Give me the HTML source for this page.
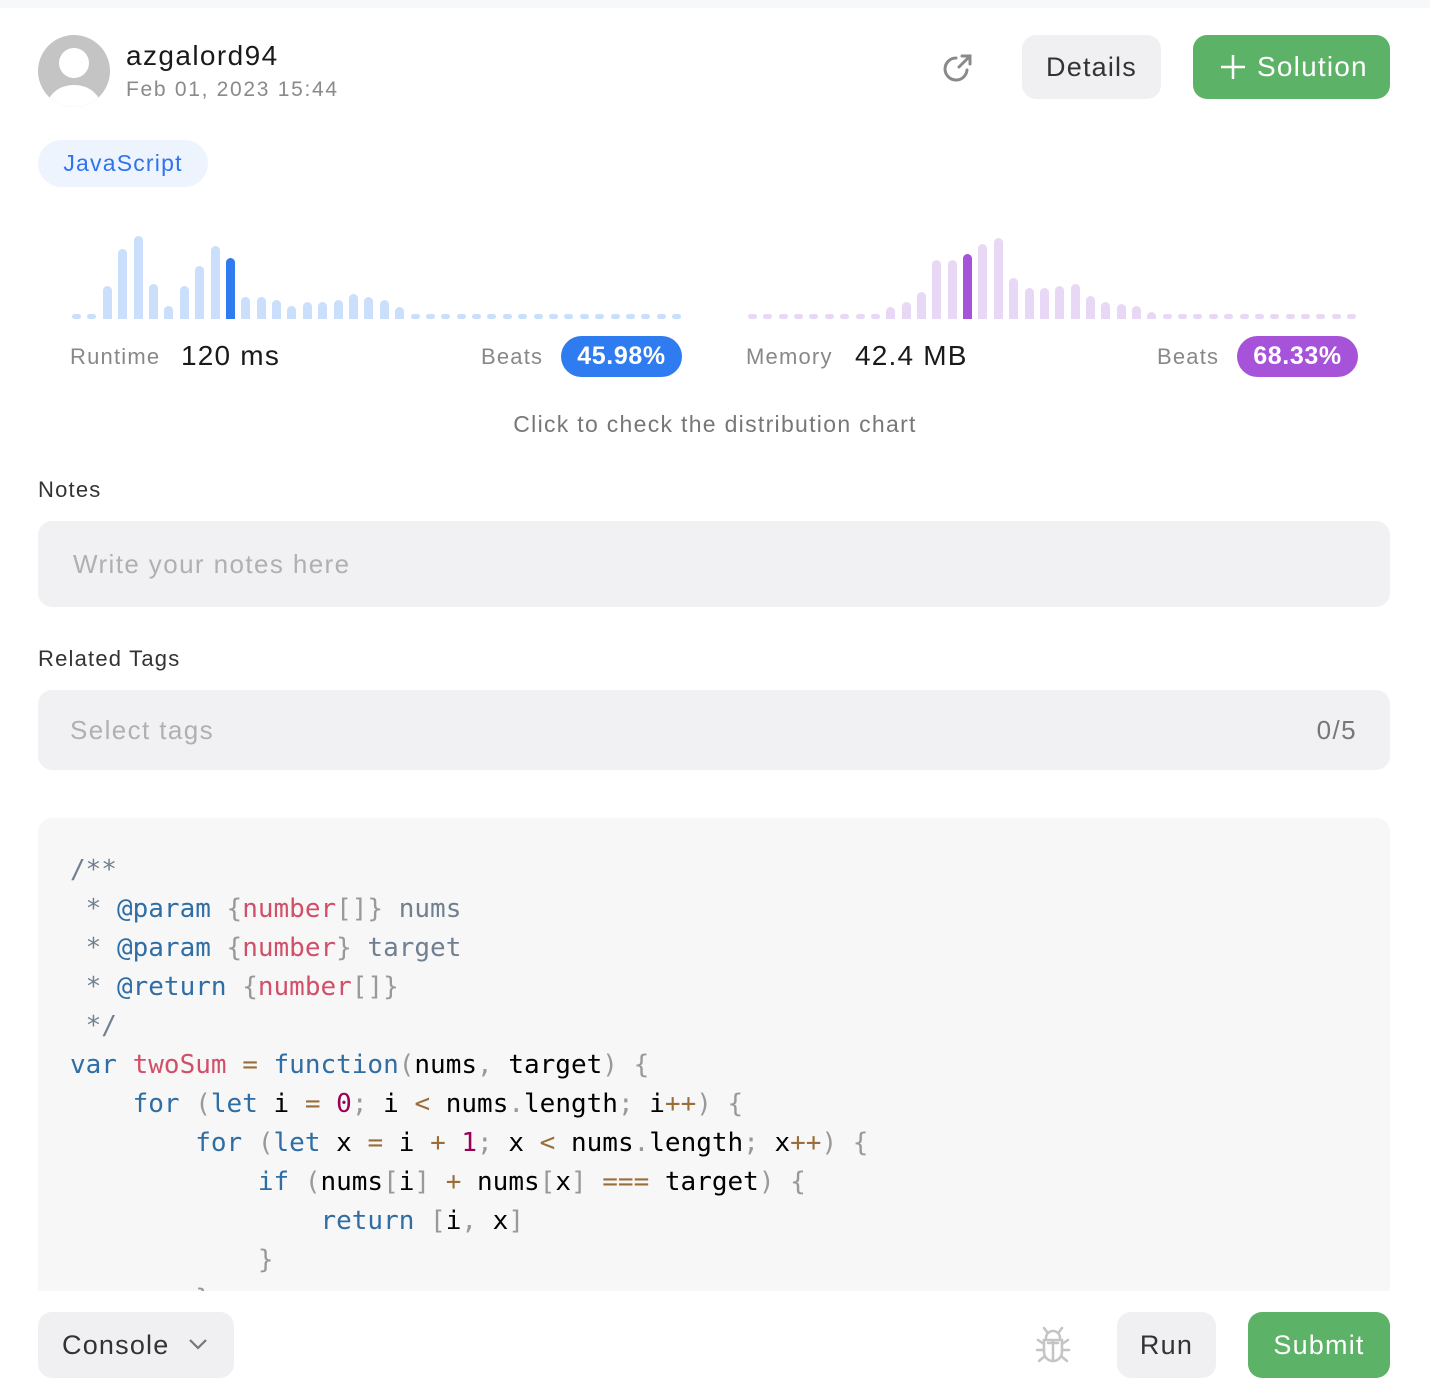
<!DOCTYPE html>
<html><head><meta charset="utf-8">
<style>
*{margin:0;padding:0;box-sizing:border-box}
body{width:1430px;height:1398px;background:#fff;font-family:"Liberation Sans",sans-serif;position:relative;overflow:hidden;letter-spacing:1.2px}
.a{position:absolute;white-space:nowrap}
.bar{position:absolute;width:9px;border-radius:5px 5px 0 0}
.code{position:absolute;left:38px;top:818px;width:1352px;height:473px;background:#f7f7f7;border-radius:14px 14px 0 0;overflow:hidden;letter-spacing:0}
.code pre{position:absolute;left:32px;top:33px;font-family:"DejaVu Sans Mono","Liberation Mono",monospace;font-size:26px;line-height:39px;color:#000}
.cm{color:#708090}.kw{color:#2f6ea5}.fn{color:#d0506a}.ty{color:#d0506a}.p{color:#999}.op{color:#9a6e3a}.nm{color:#905}
</style></head><body>
<div class="a" style="left:0;top:0;width:1430px;height:8px;background:#f7f8fa"></div>
<svg class="a" style="left:38px;top:35px" width="72" height="72" viewBox="0 0 72 72"><defs><clipPath id="c"><circle cx="36" cy="36" r="36"/></clipPath></defs><circle cx="36" cy="36" r="36" fill="#c4c4c4"/><g clip-path="url(#c)" fill="#fff"><circle cx="36" cy="28" r="15"/><ellipse cx="36" cy="72" rx="27" ry="22"/></g></svg>
<div class="a" style="left:126px;top:40px;font-size:28px;color:#1a1a1a;letter-spacing:1.4px">azgalord94</div>
<div class="a" style="left:126px;top:78px;font-size:21px;color:#8a8a8a;letter-spacing:1.7px">Feb 01, 2023 15:44</div>
<svg class="a" style="left:940px;top:50px" width="36" height="36" viewBox="0 0 36 36" fill="none" stroke="#8a8a8a" stroke-width="3" stroke-linecap="round"><path d="M27 20 A11 11 0 1 1 16 8"/><path d="M19 17 L30 6"/><path d="M22 6 H30 V14"/></svg>
<div class="a" style="left:1022px;top:35px;width:139px;height:64px;background:#f0f0f2;border-radius:14px;font-size:27px;color:#333;text-align:center;line-height:64px">Details</div>
<div class="a" style="left:1193px;top:35px;width:197px;height:64px;background:#5cb266;border-radius:14px;font-size:28px;color:#fff;line-height:64px;padding-left:64px">Solution</div>
<svg class="a" style="left:1221px;top:55px" width="24" height="24"><path d="M12 0V24M0 12H24" stroke="#fff" stroke-width="2.5"/></svg>
<div class="a" style="left:38px;top:140px;width:170px;height:47px;background:#eef4fe;border-radius:24px;font-size:23px;color:#2f73ee;text-align:center;line-height:47px">JavaScript</div>
<div id="bars"></div>
<div class="a" style="left:70px;top:344px;font-size:22px;color:#888">Runtime</div>
<div class="a" style="left:181px;top:340px;font-size:28px;color:#1a1a1a">120 ms</div>
<div class="a" style="left:481px;top:344px;font-size:22px;color:#888">Beats</div>
<div class="a" style="left:561px;top:336px;width:121px;height:41px;background:#2f7bf0;border-radius:21px;font-size:25px;color:#fff;text-align:center;line-height:41px;font-weight:bold;letter-spacing:0.6px">45.98%</div>
<div class="a" style="left:746px;top:344px;font-size:22px;color:#888">Memory</div>
<div class="a" style="left:855px;top:340px;font-size:28px;color:#1a1a1a">42.4 MB</div>
<div class="a" style="left:1157px;top:344px;font-size:22px;color:#888">Beats</div>
<div class="a" style="left:1237px;top:336px;width:121px;height:41px;background:#a653d9;border-radius:21px;font-size:25px;color:#fff;text-align:center;line-height:41px;font-weight:bold;letter-spacing:0.6px">68.33%</div>
<div class="a" style="left:0;width:1430px;top:411px;text-align:center;font-size:23px;color:#777;letter-spacing:1.3px">Click to check the distribution chart</div>
<div class="a" style="left:38px;top:477px;font-size:22px;color:#333">Notes</div>
<div class="a" style="left:38px;top:521px;width:1352px;height:86px;background:#f1f1f3;border-radius:14px;font-size:26px;color:#b0b0b0;padding-left:35px;line-height:86px;letter-spacing:1.4px">Write your notes here</div>
<div class="a" style="left:38px;top:646px;font-size:22px;color:#333">Related Tags</div>
<div class="a" style="left:38px;top:690px;width:1352px;height:80px;background:#f1f1f3;border-radius:14px;font-size:26px;color:#b0b0b0;padding-left:32px;line-height:80px;letter-spacing:1.4px">Select tags<span style="position:absolute;right:33px;color:#777">0/5</span></div>
<div class="code"><pre><span class="cm">/**
 * <span class="kw">@param</span> <span class="p">{</span><span class="ty">number</span><span class="p">[]}</span> nums
 * <span class="kw">@param</span> <span class="p">{</span><span class="ty">number</span><span class="p">}</span> target
 * <span class="kw">@return</span> <span class="p">{</span><span class="ty">number</span><span class="p">[]}</span>
 */</span>
<span class="kw">var</span> <span class="fn">twoSum</span> <span class="op">=</span> <span class="kw">function</span><span class="p">(</span>nums<span class="p">,</span> target<span class="p">)</span> <span class="p">{</span>
    <span class="kw">for</span> <span class="p">(</span><span class="kw">let</span> i <span class="op">=</span> <span class="nm">0</span><span class="p">;</span> i <span class="op">&lt;</span> nums<span class="p">.</span>length<span class="p">;</span> i<span class="op">++</span><span class="p">)</span> <span class="p">{</span>
        <span class="kw">for</span> <span class="p">(</span><span class="kw">let</span> x <span class="op">=</span> i <span class="op">+</span> <span class="nm">1</span><span class="p">;</span> x <span class="op">&lt;</span> nums<span class="p">.</span>length<span class="p">;</span> x<span class="op">++</span><span class="p">)</span> <span class="p">{</span>
            <span class="kw">if</span> <span class="p">(</span>nums<span class="p">[</span>i<span class="p">]</span> <span class="op">+</span> nums<span class="p">[</span>x<span class="p">]</span> <span class="op">===</span> target<span class="p">)</span> <span class="p">{</span>
                <span class="kw">return</span> <span class="p">[</span>i<span class="p">,</span> x<span class="p">]</span>
            <span class="p">}</span>
        <span class="p">}</span></pre></div>
<div class="a" style="left:38px;top:1312px;width:196px;height:66px;background:#f0f0f2;border-radius:14px;font-size:27px;color:#333;line-height:66px;padding-left:24px">Console</div>
<svg class="a" style="left:188px;top:1337px" width="20" height="14"><path d="M2 3L10 11L18 3" fill="none" stroke="#777" stroke-width="2.2"/></svg>
<svg class="a" style="left:1034px;top:1326px" width="38" height="38" viewBox="0 0 38 38" fill="none" stroke="#c4c4c4" stroke-width="2.5" stroke-linecap="round"><path d="M12 12 A7 7 0 0 1 26 12"/><path d="M10 14 H28 V26 A9 9 0 0 1 10 26 Z"/><path d="M19 14 V34"/><path d="M14 17 H24"/><path d="M10 18 L4 14 M28 18 L34 14 M10 24 H3 M28 24 H35 M11 30 L5 35 M27 30 L33 35 M13 6 L10 2 M25 6 L28 2"/></svg>
<div class="a" style="left:1117px;top:1312px;width:99px;height:66px;background:#f0f0f2;border-radius:14px;font-size:27px;color:#333;text-align:center;line-height:66px">Run</div>
<div class="a" style="left:1248px;top:1312px;width:142px;height:66px;background:#5cb266;border-radius:14px;font-size:27px;color:#fff;text-align:center;line-height:66px">Submit</div>
<script>
var r=[5,5,33,70,83,35,13,33,53,73,61,22,22,19,13,17,17,19,25,22,19,12].concat(Array(18).fill(5));
var m=Array(9).fill(5).concat([12,17,27,59,59,65,75,81,41,31,31,33,35,23,17,15,13,7]).concat(Array(13).fill(5));
var h='';
function d(arr,x0,x1,lc,dc,di){var s=(x1-x0)/39;arr.forEach(function(v,i){var x=x0+i*s;var rad=v<=6?'3px':'5px 5px 0 0';h+='<div class="bar" style="left:'+x.toFixed(1)+'px;top:'+(319-v)+'px;height:'+v+'px;background:'+(i==di?dc:lc)+';border-radius:'+rad+'"></div>';});}
d(r,72,672,'#c9dffc','#2f7bf0',10);
d(m,748,1347,'#e9d8f5','#a653d9',14);
document.getElementById('bars').innerHTML=h;
</script>
</body></html>
